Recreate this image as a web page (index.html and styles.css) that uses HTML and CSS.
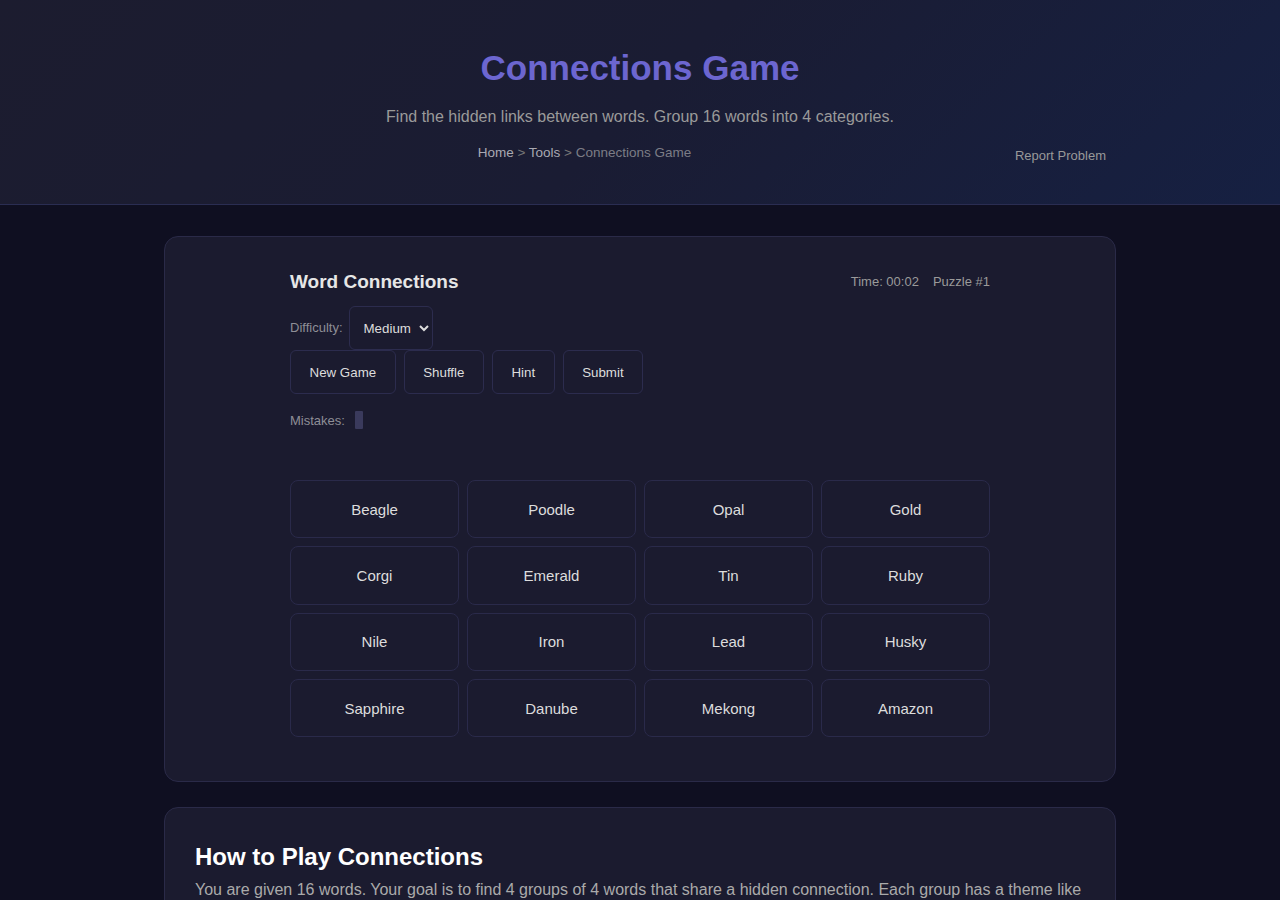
FILE: index.html
```html
<!DOCTYPE html>
<html lang="en">
<head>
<meta charset="utf-8">
<title>Connections Game</title>
<link rel="stylesheet" href="styles.css">
</head>
<body>
<header class="hero">
  <h1 class="hero-title">Connections Game</h1>
  <p class="hero-sub">Find the hidden links between words. Group 16 words into 4 categories.</p>
  <div class="crumb-row">
    <nav class="crumbs"><a href="#">Home</a> &gt; <a href="#">Tools</a> &gt; <span>Connections Game</span></nav>
    <a class="report" href="#">Report Problem</a>
  </div>
</header>
<main class="main">
  <section class="card game-card">
    <div class="game">
      <div class="game-head">
        <h2 class="game-title">Word Connections</h2>
        <div class="stats"><span>Time: 00:02</span><span>Puzzle #1</span></div>
      </div>
      <div class="diff-row">
        <label class="muted">Difficulty:</label>
        <select class="select"><option>Easy</option><option selected>Medium</option><option>Hard</option></select>
      </div>
      <div class="btn-row">
        <button class="btn">New Game</button>
        <button class="btn">Shuffle</button>
        <button class="btn">Hint</button>
        <button class="btn">Submit</button>
      </div>
      <div class="mistakes">
        <span class="muted">Mistakes:</span>
        <span class="dot"></span>
      </div>
      <div class="grid">
        <button class="tile">Beagle</button>
        <button class="tile">Poodle</button>
        <button class="tile">Opal</button>
        <button class="tile">Gold</button>
        <button class="tile">Corgi</button>
        <button class="tile">Emerald</button>
        <button class="tile">Tin</button>
        <button class="tile">Ruby</button>
        <button class="tile">Nile</button>
        <button class="tile">Iron</button>
        <button class="tile">Lead</button>
        <button class="tile">Husky</button>
        <button class="tile">Sapphire</button>
        <button class="tile">Danube</button>
        <button class="tile">Mekong</button>
        <button class="tile">Amazon</button>
      </div>
    </div>
  </section>
  <section class="card info-card">
    <h2 class="info-title">How to Play Connections</h2>
    <p class="info-text">You are given 16 words. Your goal is to find 4 groups of 4 words that share a hidden connection. Each group has a theme like dog breeds, gemstones, metals or rivers.</p>
  </section>
</main>
</body>
</html>
```

FILE: styles.css
```css
* { box-sizing: border-box; }
html, body { margin: 0; padding: 0; }
body {
  background: #0f0f21;
  font-family: "Liberation Sans", Arial, sans-serif;
  color: #ddd;
}
.hero {
  background: linear-gradient(135deg, #1c1c2f 0%, #1a1c33 50%, #162042 100%);
  border-bottom: 1px solid #2a2d52;
  padding: 46px 0 40px;
  text-align: center;
  height: 205px;
}
.hero-title {
  margin: 0;
  font-size: 35px;
  line-height: 44px;
  font-weight: bold;
  color: #6c66d0;
}
.hero-sub {
  margin: 17px 0 0;
  font-size: 16px;
  line-height: 20px;
  color: #9a9a9a;
}
.crumb-row {
  display: flex;
  width: 932px;
  margin: 17px auto 0;
  gap: 20px;
  align-items: flex-end;
}
.crumbs {
  flex: 1;
  text-align: center;
  font-size: 13.5px;
  line-height: 17px;
  color: #777;
}
.crumbs a { color: #a9a9b2; text-decoration: none; }
.crumbs span { color: #7c7c86; }
.report {
  font-size: 13px;
  line-height: 17px;
  color: #999;
  text-decoration: none;
  position: relative;
  top: 3px;
}
.main {
  width: 952px;
  margin: 0 auto;
  padding: 31px 0 40px;
}
.card {
  background: #1b1b2f;
  border: 1px solid #2a2a48;
  border-radius: 14px;
}
.game-card {
  padding: 32px 0 44px;
}
.game {
  width: 700px;
  margin: 0 auto;
}
.game-head {
  display: flex;
  justify-content: space-between;
  align-items: center;
  height: 26px;
}
.game-title {
  margin: 0;
  font-size: 19px;
  font-weight: bold;
  color: #e6e6e6;
}
.stats {
  display: flex;
  gap: 14px;
  font-size: 13px;
  color: #9a9a9a;
}
.stats span { position: relative; top: -1px; }
.diff-row {
  display: flex;
  align-items: center;
  gap: 6px;
  margin-top: 11px;
}
.diff-row .muted { position: relative; top: -1px; }
.muted { font-size: 13px; color: #8e8e96; }
.select {
  height: 44px;
  width: 84px;
  background: #1b1b2f;
  color: #ddd;
  border: 1px solid #2c2c4e;
  border-radius: 6px;
  font-family: "Liberation Sans", Arial, sans-serif;
  font-size: 13.33px;
  padding: 0 2px 0 10px;
}
.btn-row {
  display: flex;
  gap: 8px;
}
.btn {
  height: 44px;
  padding: 0 18.5px;
  background: #1b1b2f;
  color: #ddd;
  border: 1px solid #2c2c4e;
  border-radius: 6px;
  font-family: "Liberation Sans", Arial, sans-serif;
  font-size: 13.33px;
}
.mistakes {
  display: flex;
  align-items: center;
  gap: 10px;
  margin-top: 16px;
  height: 20px;
}
.dot {
  width: 8px;
  height: 18px;
  background: #3a3a5c;
  border-radius: 1px;
}
.grid {
  display: grid;
  grid-template-columns: repeat(4, 1fr);
  gap: 8px 8px;
  margin-top: 50px;
}
.tile {
  height: 58.33px;
  background: #1b1b2f;
  color: #ddd;
  border: 1px solid #2a2a4a;
  border-radius: 8px;
  font-family: "Liberation Sans", Arial, sans-serif;
  font-size: 15px;
}
.info-card {
  margin-top: 25px;
  padding: 34px 30px 30px;
}
.info-title {
  margin: 0;
  font-size: 24px;
  line-height: 30px;
  font-weight: bold;
  color: #fff;
}
.info-text {
  margin: 5px 0 0;
  font-size: 16px;
  line-height: 26px;
  color: #aaa;
}
```
